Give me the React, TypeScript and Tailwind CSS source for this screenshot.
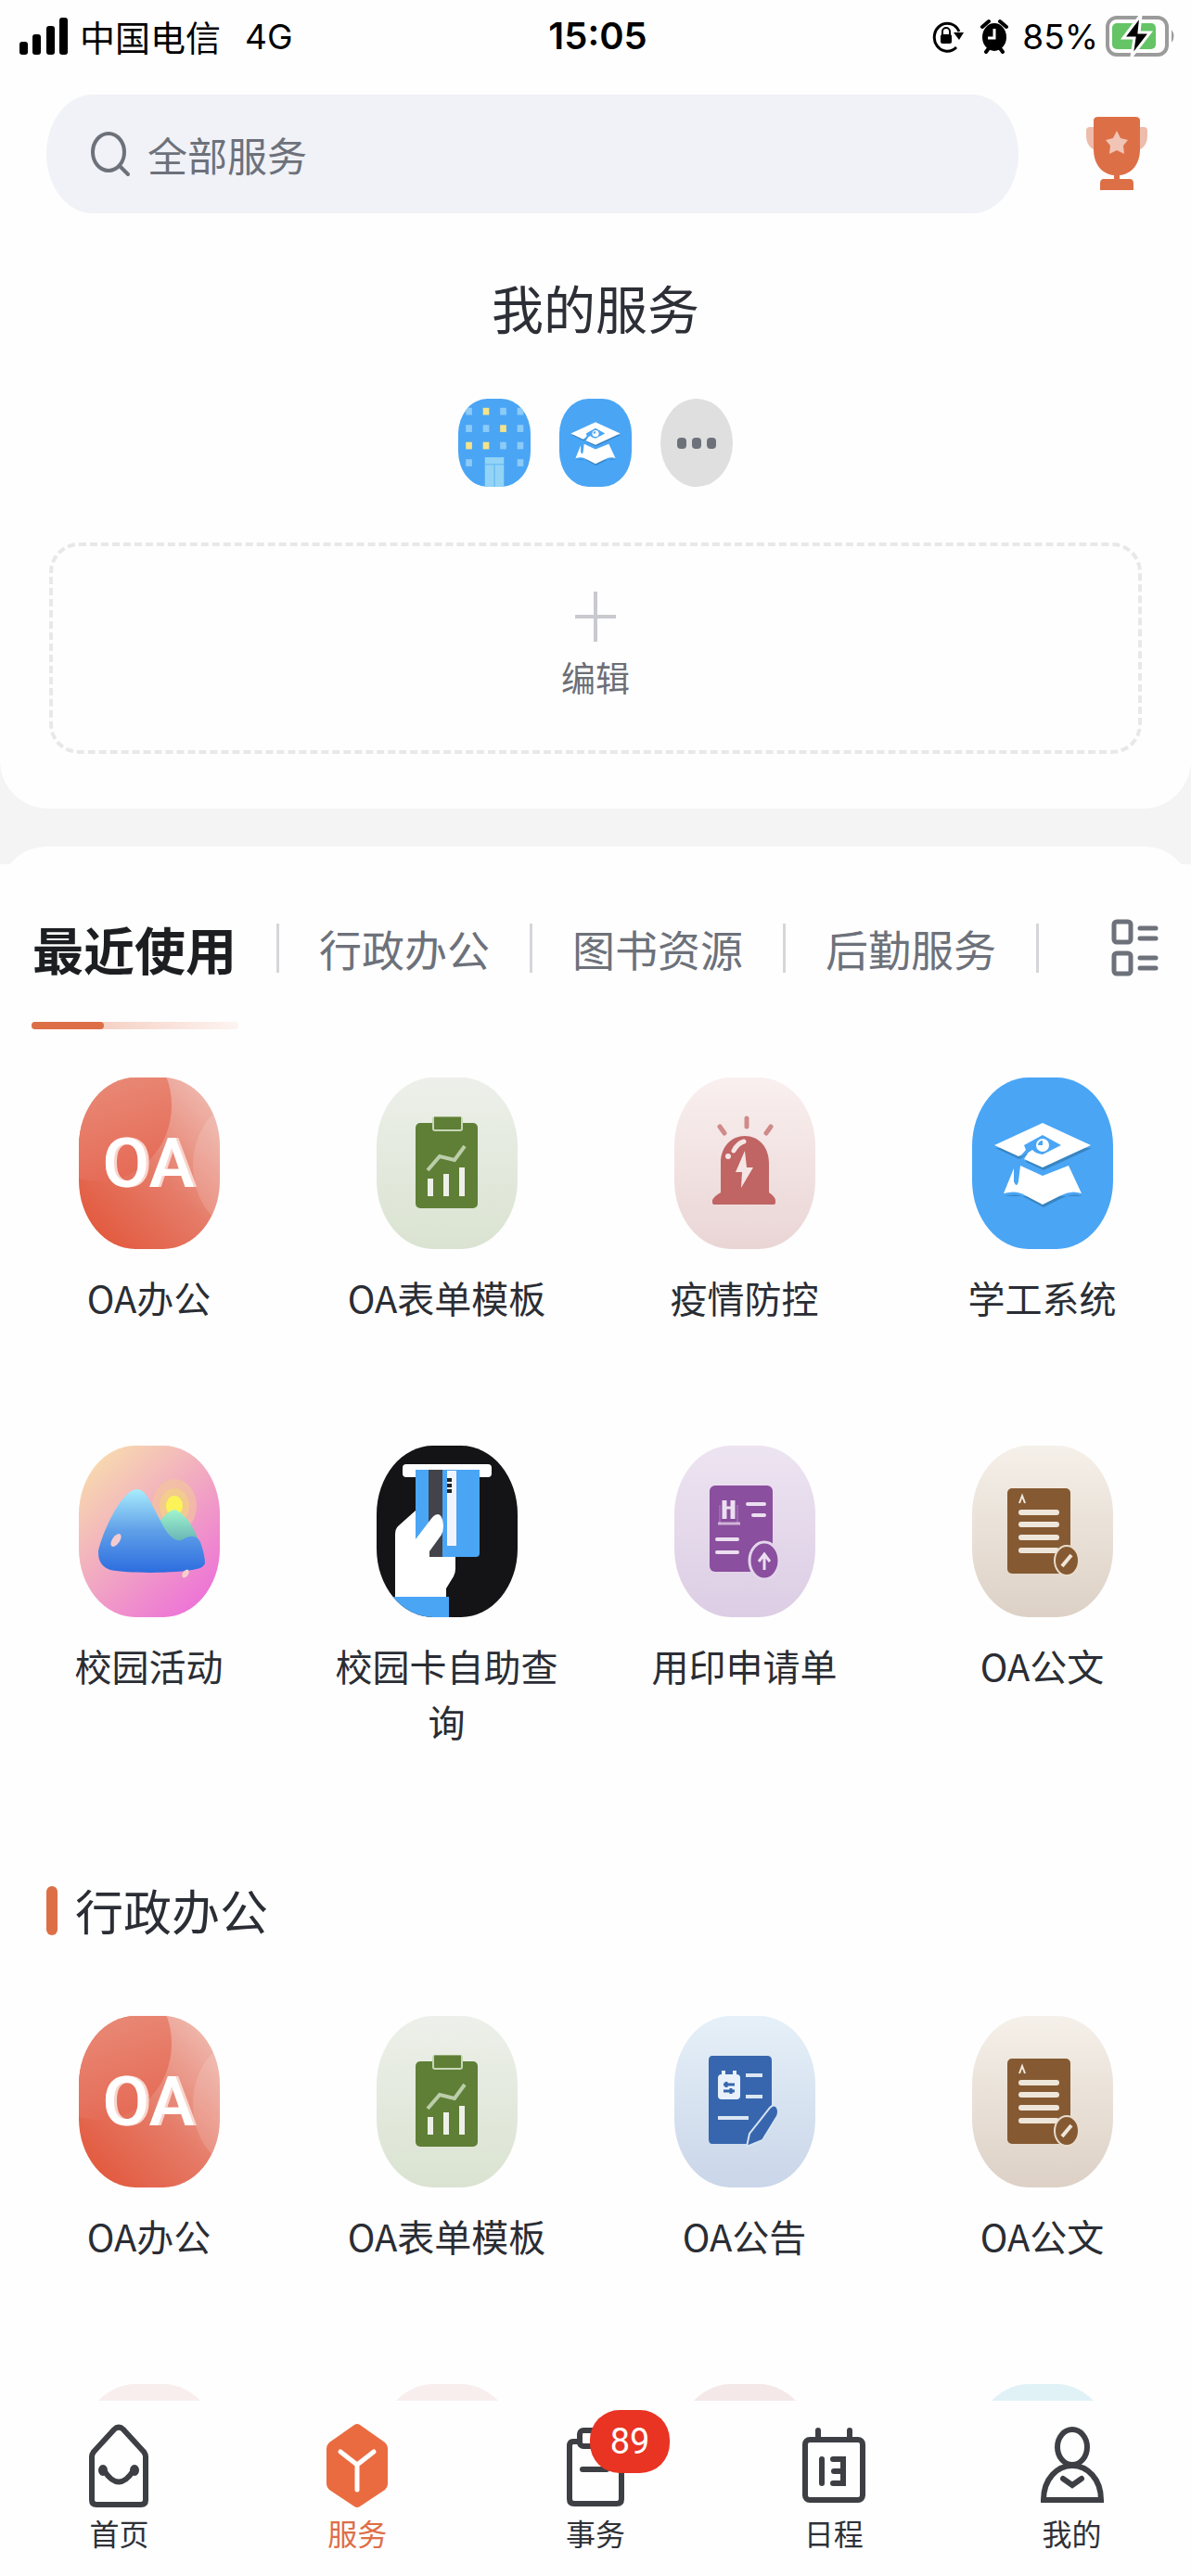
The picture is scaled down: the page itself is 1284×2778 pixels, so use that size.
import type { ReactNode } from "react";

type Tile = { label: string; icon: ReactNode };

/* ---------- service artwork, all on a 152 x 185 tile ---------- */

function Art({ children }: { children?: ReactNode }) {
  return (
    <svg viewBox="0 0 152 185" className="block h-full w-full" aria-hidden="true">
      {children}
    </svg>
  );
}

function OaIcon() {
  return (
    <Art>
      <defs>
        <linearGradient id="oaBase" x1="0.15" y1="1" x2="0.9" y2="0.1">
          <stop offset="0" stopColor="#e2573b" />
          <stop offset="0.5" stopColor="#e57b68" />
          <stop offset="1" stopColor="#efb6ab" />
        </linearGradient>
        <linearGradient id="oaGlow" x1="0.3" y1="0" x2="0.6" y2="1">
          <stop offset="0" stopColor="#ea9a88" />
          <stop offset="1" stopColor="#e56b56" />
        </linearGradient>
      </defs>
      <rect width="152" height="185" fill="url(#oaBase)" />
      <ellipse cx="22" cy="30" rx="78" ry="82" fill="url(#oaGlow)" />
      <ellipse cx="175" cy="95" rx="52" ry="68" fill="#fff" opacity="0.14" />
      <text x="78" y="118" textAnchor="middle" fontFamily="Roboto, sans-serif" fontWeight="500" fontSize="74" fill="#f9d5cd">
        OA
      </text>
      <text x="75" y="118" textAnchor="middle" fontFamily="Roboto, sans-serif" fontWeight="500" fontSize="74" fill="#fff">
        OA
      </text>
    </Art>
  );
}

function FormIcon() {
  return (
    <Art>
      <rect x="42" y="49" width="67" height="92" rx="5" fill="#5e7f35" />
      <rect x="61" y="43" width="31" height="14" rx="2" fill="#5e7f35" stroke="#c8d6b8" strokeWidth="2" />
      <path d="M62 44h29" stroke="#5e7f35" strokeWidth="3" />
      <path d="M55 100L68 85L84 89L95 74" fill="none" stroke="#bccdaa" strokeWidth="4" />
      <path d="M55 109h6v19h-6zM72 104h6v24h-6zM89 97h6v31h-6z" fill="#edf0e8" />
    </Art>
  );
}

function AlarmIcon() {
  return (
    <Art>
      <path d="M78 44v9M49 53l5 7M104 53l-5 7" stroke="#cf8a8a" strokeWidth="5" strokeLinecap="round" />
      <path d="M50 124V92C50 74 62 63 76 63S102 74 102 92V124Q108 128 109 132V135Q109 137 106 137H44Q41 137 41 135V132Q43 128 50 124Z" fill="#c06464" />
      <path d="M64 79Q68 71 75 69" fill="none" stroke="#f5e6e5" strokeWidth="5" strokeLinecap="round" />
      <circle cx="58" cy="85" r="3" fill="#f5e6e5" />
      <path d="M76 79L66 102H73L72 119L85 97H78Z" fill="#f5e6e5" />
    </Art>
  );
}

function StudentIcon() {
  return (
    <Art>
      <rect width="152" height="185" fill="#4aa5f5" />
      <g fill="#2f6f9f" opacity="0.6" transform="translate(1 3)">
        <path d="M24 73L50 85L58 80L57 88L76 97L128 73Z" />
        <path d="M34 125Q48 121 57 127L76 137L96 127Q107 121 118 125Z" />
      </g>
      <path d="M76 49L128 73L76 97L56 88L61 80L50 85L24 73Z" fill="#fff" />
      <path d="M56 73L76 62L96 73L76 83Q68 82 65 78L56 84L51 86L58 78Z" fill="#4aa5f5" />
      <circle cx="76" cy="73" r="7" fill="#fff" />
      <path d="M76 73v-5a5 5 0 0 0-5 5z" fill="#4aa5f5" />
      <path d="M52 95L76 106L104 95L118 125Q107 121 96 127L76 137L57 127Q48 121 34 125L45 98L45 112Q48 120 50 112Z" fill="#fff" />
    </Art>
  );
}

function ActivityIcon() {
  return (
    <Art>
      <defs>
        <linearGradient id="actBg" x1="0.1" y1="0.05" x2="0.8" y2="0.95">
          <stop offset="0" stopColor="#f8dcae" />
          <stop offset="0.35" stopColor="#f3b9bb" />
          <stop offset="1" stopColor="#ed75d6" />
        </linearGradient>
        <linearGradient id="actHill" x1="0" y1="0" x2="0" y2="1">
          <stop offset="0" stopColor="#a8ecfc" />
          <stop offset="0.5" stopColor="#5f9fe8" />
          <stop offset="1" stopColor="#2d6ddf" />
        </linearGradient>
        <linearGradient id="actBack" x1="0" y1="0" x2="0" y2="1">
          <stop offset="0" stopColor="#a0f5cc" />
          <stop offset="1" stopColor="#5aa3b0" />
        </linearGradient>
      </defs>
      <rect width="152" height="185" fill="url(#actBg)" />
      <ellipse cx="103" cy="65" rx="24" ry="29" fill="#f3c898" opacity="0.6" />
      <ellipse cx="103" cy="65" rx="16" ry="19" fill="#f2d183" opacity="0.7" />
      <ellipse cx="103" cy="65" rx="9" ry="11" fill="#fcf358" />
      <path d="M84 84Q98 69 103 69T118 81Q128 95 130 108L100 112Z" fill="url(#actBack)" />
      <path d="M63 47C72 47 78 62 87 79C94 94 104 108 114 100Q126 94 131 104Q136 118 136 127Q134 132 127 133C105 138 55 138 34 134Q21 130 21 115C23 100 45 47 63 47Z" fill="url(#actHill)" />
      <ellipse cx="40" cy="102" rx="4" ry="8" transform="rotate(35 40 102)" fill="#f3cbd0" />
      <ellipse cx="115" cy="138" rx="3" ry="5" transform="rotate(35 115 138)" fill="#f4cfc9" />
    </Art>
  );
}

function CardIcon() {
  return (
    <Art>
      <rect width="152" height="185" fill="#141416" />
      <rect x="28" y="20" width="96" height="14" rx="4" fill="#fff" />
      <path d="M42 26H111V116Q111 120 107 120H42Z" fill="#4aa5f5" />
      <rect x="56" y="26" width="15" height="94" fill="#434349" />
      <rect x="76" y="27" width="10" height="81" fill="#f3f4fb" />
      <path d="M76 37h5M76 43h5M76 49h5" stroke="#222" strokeWidth="4" />
      <path d="M42 70L23 87Q20 90 20 96V163H75V154L83 141Q85 137 85 133V120H57V114L70 96Q72 92 72 86Q71 74 66 74Q62 74 58 80L42 101Z" fill="#fff" />
      <rect x="18" y="163" width="60" height="22" fill="#4aa5f5" />
    </Art>
  );
}

function StampIcon() {
  return (
    <Art>
      <rect x="38" y="43" width="68" height="93" rx="6" fill="#8a4f9e" />
      <g stroke="#ebdff0" strokeWidth="4">
        <path d="M54 59v20M63 59v20" strokeWidth="5" />
        <path d="M55 67h8" strokeWidth="3" />
        <path d="M49 64v20M68 64v20" strokeWidth="1" opacity="0.4" />
        <path d="M47 84h24" strokeWidth="3" opacity="0.7" />
        <path d="M79 63h18M85 75h12M46 101h22M46 115h22" strokeLinecap="round" />
      </g>
      <ellipse cx="97" cy="124" rx="16" ry="20" fill="#8a4f9e" stroke="#e3d6ea" strokeWidth="3" />
      <path d="M97 134V118M91 125L97 117L103 125" fill="none" stroke="#ebdff0" strokeWidth="3" />
    </Art>
  );
}

function DocIcon() {
  return (
    <Art>
      <rect x="38" y="46" width="68" height="92" rx="5" fill="#855a32" />
      <path d="M51 62L54 54L57 62" fill="none" stroke="#f0e8dc" strokeWidth="2" />
      <path d="M53 72h38M53 85h38M53 99h38M53 113h38" stroke="#efe6db" strokeWidth="6" strokeLinecap="round" />
      <ellipse cx="102" cy="124" rx="13" ry="16" fill="#855a32" stroke="#e8ddd0" strokeWidth="2" />
      <path d="M97 130L107 118" stroke="#efe6db" strokeWidth="4" />
    </Art>
  );
}

function NoticeIcon() {
  return (
    <Art>
      <path d="M41 43H100Q105 43 105 48V96L84 126L79 138H41Q37 138 37 133V48Q37 43 41 43Z" fill="#3766ae" />
      <rect x="47" y="63" width="24" height="27" rx="4" fill="#e9f2fa" />
      <path d="M53 59v6M65 59v6" stroke="#e9f2fa" strokeWidth="4" />
      <path d="M53 74h12M53 81h12M56 71v6M61 78v6" stroke="#3766ae" strokeWidth="3" />
      <path d="M77 64h18M77 87h18M47 110h33" stroke="#dbe7f4" strokeWidth="4" />
      <path d="M103 99Q108 94 111 99Q113 103 111 108L95 134L78 141L81 127Z" fill="#3766ae" stroke="#d6e3f0" strokeWidth="2" />
    </Art>
  );
}

const windows = [
  ["b", "y", "b", "b"],
  ["b", "b", "y", "b"],
  ["y", "y", "b", "b"],
  ["b", "", "", "b"],
];

function BuildingIcon() {
  return (
    <Art>
      <rect width="152" height="185" fill="#4aa5f5" />
      {windows.map((row, r) =>
        row.map((cell, c) =>
          cell ? (
            <rect
              key={`${r}-${c}`}
              x={16 + c * 36}
              y={19 + r * 36}
              width="13"
              height="15"
              fill={cell === "y" ? "#f5e38a" : "#8ccbf7"}
            />
          ) : null
        )
      )}
      <rect x="56" y="123" width="40" height="62" fill="#93d4f6" />
      <path d="M56 138h40M76 138v47" stroke="#6fbdf3" strokeWidth="3" />
    </Art>
  );
}

/* ---------- tiles ---------- */

const tileClass = "h-[185px] w-[152px] shrink-0 overflow-hidden rounded-[40%]";

const oa = { label: "OA办公", icon: <div className={tileClass}><OaIcon /></div> };
const form = {
  label: "OA表单模板",
  icon: <div className={`${tileClass} bg-linear-to-b from-[#edf0ea] to-[#dae3d1]`}><FormIcon /></div>,
};
const doc = {
  label: "OA公文",
  icon: <div className={`${tileClass} bg-linear-to-b from-[#f5f0e9] to-[#ddd1c6]`}><DocIcon /></div>,
};

const recent: Tile[] = [
  oa,
  form,
  {
    label: "疫情防控",
    icon: <div className={`${tileClass} bg-linear-to-b from-[#f9f0ef] to-[#ead5d5]`}><AlarmIcon /></div>,
  },
  { label: "学工系统", icon: <div className={tileClass}><StudentIcon /></div> },
  { label: "校园活动", icon: <div className={tileClass}><ActivityIcon /></div> },
  { label: "校园卡自助查询", icon: <div className={tileClass}><CardIcon /></div> },
  {
    label: "用印申请单",
    icon: <div className={`${tileClass} bg-linear-to-b from-[#ede4f1] to-[#dccde4]`}><StampIcon /></div>,
  },
  doc,
];

const office: Tile[] = [
  oa,
  form,
  {
    label: "OA公告",
    icon: <div className={`${tileClass} bg-linear-to-b from-[#e5f0f8] to-[#cad6e9]`}><NoticeIcon /></div>,
  },
  doc,
];

const moreTiles = ["bg-[#f8eeee]", "bg-[#f8eeee]", "bg-[#f4e8e8]", "bg-[#e1f2f7]"];

function ServiceTile({ label, icon }: Tile) {
  return (
    <button type="button" className="flex flex-col items-center gap-[22px]">
      {icon}
      <span className="min-h-[120px] w-[248px] text-[40px] leading-[60px] text-[#2a2d34]">{label}</span>
    </button>
  );
}

/* ---------- page parts ---------- */

function StatusBar() {
  return (
    <div className="grid h-[78px] grid-cols-[1fr_auto_1fr] items-center pl-[21px] pr-[16px] text-black">
      <div className="flex items-center gap-[12px]">
        <svg width="53" height="40" viewBox="0 0 53 40" aria-hidden="true">
          <rect x="0" y="26" width="9" height="14" rx="3" />
          <rect x="14" y="18" width="9" height="22" rx="3" />
          <rect x="29" y="9" width="9" height="31" rx="3" />
          <rect x="43" y="0" width="9" height="40" rx="3" />
        </svg>
        <span className="text-[38px] leading-none">中国电信</span>
        <span className="ml-[14px] font-[Inter,sans-serif] text-[37px] leading-none">4G</span>
      </div>
      <span className="font-[Inter,sans-serif] text-[40px] leading-none font-semibold">15:05</span>
      <div className="flex items-center justify-end">
        <svg width="34" height="36" viewBox="0 0 34 36" aria-hidden="true">
          <path d="M26 30A14 15 0 1 1 29 13" fill="none" stroke="#000" strokeWidth="3" />
          <path d="M23 14H34L29 22Z" />
          <rect x="9" y="16" width="12" height="10" rx="2" />
          <path d="M11 17V13a4 4 0 0 1 8 0v4" fill="none" stroke="#000" strokeWidth="2" />
        </svg>
        <svg className="ml-[18px]" width="30" height="38" viewBox="0 0 30 38" aria-hidden="true">
          <ellipse cx="15" cy="20" rx="13" ry="15" />
          <path d="M2 9L9 3M28 9L21 3M6 36L9 32M24 36L21 32" stroke="#000" strokeWidth="4" strokeLinecap="round" />
          <path d="M15 11V21H8" fill="none" stroke="#fff" strokeWidth="3" />
        </svg>
        <span className="ml-[15px] font-[Inter,sans-serif] text-[37px] leading-none">85%</span>
        <svg className="ml-[8px]" width="76" height="48" viewBox="0 0 76 48" aria-hidden="true">
          <rect x="2" y="4" width="64" height="40" rx="10" fill="none" stroke="#9b9b9b" strokeWidth="4" />
          <rect x="7" y="10" width="47" height="28" rx="5" fill="#65c466" />
          <path d="M71 17q5 7 0 14z" fill="#9b9b9b" />
          <path d="M38 1L19 26H31L28 46L48 20H36Z" fill="#000" stroke="#fff" strokeWidth="3" />
        </svg>
      </div>
    </div>
  );
}

function TrophyIcon() {
  return (
    <svg width="68" height="80" viewBox="0 0 68 80" aria-hidden="true">
      <path d="M1 15Q1 11 5 11H14V37Q1 34 1 20ZM67 15Q67 11 63 11H54V37Q67 34 67 20Z" fill="#eebcab" />
      <path d="M9 4Q9 0 14 0H54Q59 0 59 4V35C59 52 49 62 37 63V67H48Q52 67 52 72V79H16V72Q16 67 20 67H31V63C19 62 9 52 9 35Z" fill="#dd6f47" />
      <path d="M34 15L38 23L46 25L41 31L42 40L34 36L26 40L27 31L22 25L30 23Z" fill="#f1c5b6" />
    </svg>
  );
}

const tabs = ["最近使用", "行政办公", "图书资源", "后勤服务"];

function CategoryTabs() {
  return (
    <div>
      <div className="flex h-[60px] items-center gap-[43px] pr-[35px] pl-[35px]">
        {tabs.map((tab, i) => (
          <div key={tab} className="flex shrink-0 items-center gap-[43px]">
            <button
              type="button"
              className={
                i === 0
                  ? "text-[55px] leading-[60px] font-bold text-[#1d1e22]"
                  : "text-[46px] leading-[60px] text-[#6d717a]"
              }
            >
              {tab}
            </button>
            <span className="h-[53px] w-[3px] bg-[#d5d6d9]" />
          </div>
        ))}
        <button type="button" aria-label="全部分类" className="ml-auto">
          <svg width="51" height="62" viewBox="0 0 51 62" aria-hidden="true">
            <g fill="none" stroke="#6d717a" strokeWidth="5">
              <rect x="3" y="3" width="18" height="22" rx="3" />
              <rect x="3" y="37" width="18" height="22" rx="3" />
              <path d="M31 10H48M31 21H48M31 42H48M31 53H48" strokeLinecap="round" />
            </g>
          </svg>
        </button>
      </div>
      <div className="mt-[50px] ml-[34px] h-2 w-[223px] rounded-full bg-linear-to-r from-[#f0bfae] to-[#fdf4f1]">
        <div className="h-full w-[78px] rounded-full bg-[#dd6f47]" />
      </div>
    </div>
  );
}

/* ---------- bottom navigation ---------- */

function HomeIcon() {
  return (
    <svg width="68" height="92" viewBox="0 0 68 92" fill="none" stroke="#3d3f44" strokeWidth="6" aria-hidden="true">
      <path d="M5 36Q5 34 7 31L29 7Q34 2 39 7L61 31Q63 34 63 36V83Q63 88 58 88H10Q5 88 5 83Z" />
      <path d="M18 51Q34 76 50 51" strokeLinecap="round" />
      <ellipse cx="17" cy="51" rx="2" ry="3" fill="#3d3f44" />
      <ellipse cx="51" cy="51" rx="2" ry="3" fill="#3d3f44" />
    </svg>
  );
}

function ServiceIcon() {
  return (
    <svg width="68" height="92" viewBox="0 0 68 92" aria-hidden="true">
      <path d="M31 2Q34 0 37 2L64 21Q67 24 67 27V66Q67 69 64 72L37 90Q34 92 31 90L4 72Q1 69 1 66V27Q1 24 4 21Z" fill="#eb6b40" />
      <path d="M16 31L34 45L52 31M34 45V72" fill="none" stroke="#fff" strokeWidth="5" strokeLinecap="round" />
    </svg>
  );
}

function TaskIcon() {
  return (
    <svg width="68" height="92" viewBox="0 0 68 92" fill="none" stroke="#3d3f44" strokeWidth="6" aria-hidden="true">
      <path d="M17 20H10Q6 20 6 25V82Q6 87 11 87H57Q62 87 62 82V25Q62 20 58 20H51" />
      <rect x="17" y="8" width="34" height="17" rx="4" />
      <path d="M20 50H46" strokeLinecap="round" />
    </svg>
  );
}

function CalendarIcon() {
  return (
    <svg width="68" height="92" viewBox="0 0 68 92" fill="none" stroke="#3d3f44" strokeWidth="6" aria-hidden="true">
      <rect x="3" y="18" width="62" height="65" rx="5" />
      <path d="M17 8V17M51 8V17M21 39V65M33 39H44V65H33M34 52H44" strokeLinecap="round" />
    </svg>
  );
}

function MineIcon() {
  return (
    <svg width="68" height="92" viewBox="0 0 68 92" fill="none" stroke="#3d3f44" strokeWidth="6" aria-hidden="true">
      <ellipse cx="34" cy="26" rx="16" ry="19" />
      <path d="M3 83C3 60 18 46 34 46S65 60 65 83Z" />
      <path d="M24 60L34 67L44 60" strokeLinecap="round" />
    </svg>
  );
}

const navItems = [
  { label: "首页", icon: <HomeIcon /> },
  { label: "服务", icon: <ServiceIcon />, active: true },
  { label: "事务", icon: <TaskIcon />, badge: 89 },
  { label: "日程", icon: <CalendarIcon /> },
  { label: "我的", icon: <MineIcon /> },
];

function BottomNav() {
  return (
    <nav className="grid shrink-0 grid-cols-5 bg-[#fefefe] pt-[24px] pb-[25px]">
      {navItems.map((item) => (
        <a key={item.label} href="#" className="flex flex-col items-center gap-[4px]">
          <span className="relative">
            {item.icon}
            {item.badge && (
              <span className="absolute -top-[14px] left-[28px] flex h-[68px] w-[86px] items-center justify-center rounded-[32px] bg-[#e93323] font-[Roboto,sans-serif] text-[38px] text-white">
                {item.badge}
              </span>
            )}
          </span>
          <span
            className={
              item.active
                ? "text-[32px] leading-[44px] text-[#dd6f47]"
                : "text-[32px] leading-[44px] text-[#2f3136]"
            }
          >
            {item.label}
          </span>
        </a>
      ))}
    </nav>
  );
}

export default function App() {
  return (
    <div className="flex h-dvh flex-col bg-[#fefefe] font-['Noto_Sans_CJK_SC',sans-serif]">
      <main className="min-h-0 flex-1 overflow-y-auto [scrollbar-width:none]">
        <div className="bg-[#f4f4f4]">
          <section className="rounded-b-[52px] bg-[#fefefe] pb-[59px]">
            <StatusBar />

            {/* Search */}
            <div className="flex items-center gap-[72px] pt-6 pr-[46px] pl-[50px]">
              <label className="flex h-[128px] flex-1 items-center gap-[18px] rounded-[50px/64px] bg-[#f0f2f7] pl-[48px]">
                <svg width="43" height="50" viewBox="0 0 43 50" fill="none" stroke="#6d717a" strokeWidth="4" aria-hidden="true">
                  <ellipse cx="19" cy="23" rx="17" ry="20" />
                  <path d="M31 38L40 47" strokeLinecap="round" />
                </svg>
                <input
                  type="search"
                  aria-label="搜索服务"
                  placeholder="全部服务"
                  className="min-w-0 flex-1 bg-transparent text-[43px] leading-[60px] outline-none placeholder:text-[#6d717a]"
                />
              </label>
              <button type="button" aria-label="排行榜">
                <TrophyIcon />
              </button>
            </div>

            {/* My services */}
            <h1 className="mt-[71px] text-center text-[56px] leading-[60px] text-[#2d2f36]">我的服务</h1>
            <div className="mt-[69px] flex justify-center gap-[31px]">
              <button type="button" aria-label="宿舍" className="h-[95px] w-[78px] overflow-hidden rounded-[40%]">
                <BuildingIcon />
              </button>
              <button type="button" aria-label="学工系统" className="h-[95px] w-[78px] overflow-hidden rounded-[40%]">
                <StudentIcon />
              </button>
              <button
                type="button"
                aria-label="更多"
                className="flex h-[95px] w-[78px] items-center justify-center gap-[6px] rounded-[50%] bg-[#dfdfdf]"
              >
                <span className="h-[12px] w-[10px] rounded-[4px] bg-[#6d717a]" />
                <span className="h-[12px] w-[10px] rounded-[4px] bg-[#6d717a]" />
                <span className="h-[12px] w-[10px] rounded-[4px] bg-[#6d717a]" />
              </button>
            </div>
            <div className="mt-[60px] px-[53px]">
              <button
                type="button"
                className="flex h-[228px] w-full flex-col items-center justify-center gap-[8px] rounded-[32px] border-4 border-dashed border-[#e8e8ea]"
              >
                <svg width="44" height="54" viewBox="0 0 44 54" stroke="#c9c9d0" strokeWidth="4" aria-hidden="true">
                  <path d="M22 0V54M0 27H44" />
                </svg>
                <span className="text-[37px] leading-[60px] text-[#6d6f76]">编辑</span>
              </button>
            </div>
          </section>
          <div className="mt-[41px] h-[19px] overflow-hidden">
            <div className="h-[60px] rounded-t-[50px] bg-[#fefefe]" />
          </div>
        </div>

        <section className="pt-[60px]">
          <CategoryTabs />
          <div className="mt-[52px] grid grid-cols-4 gap-y-[70px]">
            {recent.map((item) => (
              <ServiceTile key={item.label} {...item} />
            ))}
          </div>
        </section>

        <section className="mt-[144px]">
          <h2 className="flex items-center gap-[19px] pl-[50px] text-[52px] leading-[60px] text-[#2a2d34]">
            <span className="h-[53px] w-[12px] rounded-full bg-[#dd6f47]" />
            行政办公
          </h2>
          <div className="mt-[84px] grid grid-cols-4 gap-y-[70px]">
            {office.map((item) => (
              <ServiceTile key={item.label} {...item} />
            ))}
            {moreTiles.map((color, i) => (
              <div key={i} className="flex justify-center">
                <div className={`${tileClass} ${color}`} />
              </div>
            ))}
          </div>
        </section>
      </main>
      <BottomNav />
    </div>
  );
}
